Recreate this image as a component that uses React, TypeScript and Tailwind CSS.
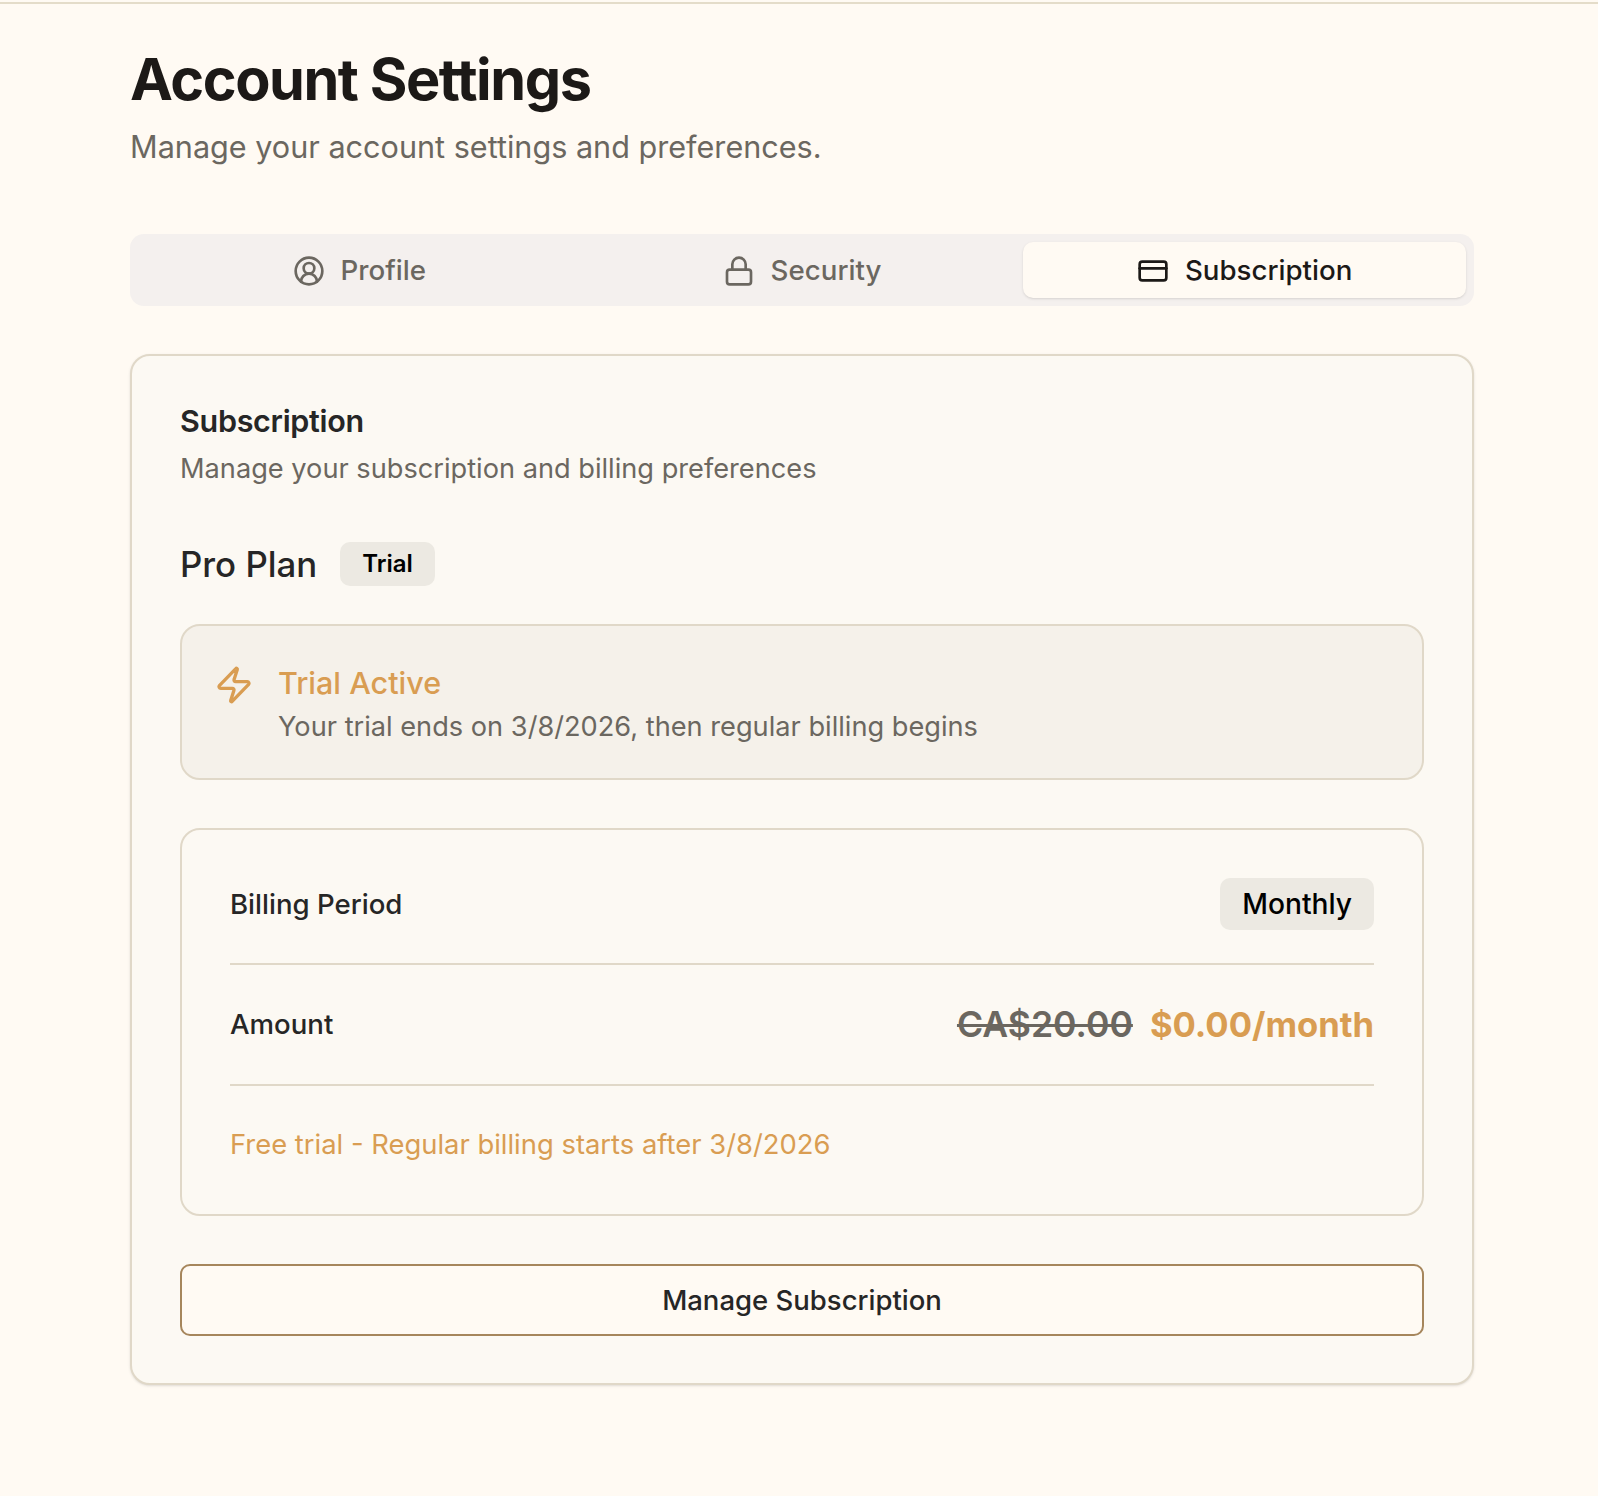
import { CircleUserRound, CreditCard, Lock, Zap } from "lucide-react";

const App = () => {
  return (
    <div className="min-h-[1496px] bg-[#fffaf3] font-['Inter',sans-serif] text-[#1c1917] overflow-hidden">
      <div className="h-[4px] border-b-[2px] border-[#e4dcc9]" />
      <main className="w-[1344px] ml-[130px] pt-[37px]">
        <h1 className="text-[57.6px] leading-[76px] font-bold tracking-[-0.025em]">Account Settings</h1>
        <p className="mt-[10px] text-[30.6px] leading-[40px] text-[#6b6760]">Manage your account settings and preferences.</p>

        <div className="mt-[67px] h-[72px] grid grid-cols-3 gap-0 rounded-[14px] bg-[#f4f0ee] p-2">
          <button className="flex items-center justify-center gap-[16px] rounded-[10px] pt-[2px] text-[27.7px] font-medium text-[#6b6760]">
            <CircleUserRound className="w-[32px] h-[32px]" strokeWidth={2} />
            Profile
          </button>
          <button className="flex items-center justify-center gap-[16px] rounded-[10px] pt-[2px] text-[27.7px] font-medium text-[#6b6760]">
            <Lock className="w-[32px] h-[32px]" strokeWidth={2} />
            Security
          </button>
          <button className="flex items-center justify-center gap-[16px] rounded-[10px] pt-[2px] bg-[#fffaf3] text-[27.7px] font-medium text-[#1c1917] shadow-sm">
            <CreditCard className="w-[32px] h-[32px]" strokeWidth={2} />
            Subscription
          </button>
        </div>

        <section className="mt-[48px] h-[1031px] rounded-[20px] border-2 border-[#e0d8c8] bg-[#fcf9f3] px-[48px] pt-[47px] shadow-sm">
          <h2 className="text-[30.5px] leading-[36px] font-semibold tracking-[-0.01em] text-[#262626]">Subscription</h2>
          <p className="mt-[10px] text-[27.2px] leading-[40px] text-[#6b6760]">Manage your subscription and billing preferences</p>

          <div className="mt-[53px] flex items-center gap-[23px]">
            <span className="text-[34.8px] leading-[44px] font-medium text-[#262626]">Pro Plan</span>
            <span className="rounded-[10px] bg-[#ece9e2] px-[22px] h-[44px] flex items-center text-[24px] font-semibold text-black">Trial</span>
          </div>

          <div className="mt-[38px] h-[156px] flex gap-[24px] rounded-[20px] border-2 border-[#e0d8c8] bg-[#f5f1ea] pl-[32px] pt-[37px]">
            <Zap className="mt-[2px] w-[40px] h-[40px] text-[#d99d52]" strokeWidth={2} />
            <div>
              <div className="text-[30.5px] leading-[40px] font-medium text-[#d99d52]">Trial Active</div>
              <div className="mt-[4px] text-[27.2px] leading-[40px] text-[#6b6760]">Your trial ends on 3/8/2026, then regular billing begins</div>
            </div>
          </div>

          <div className="mt-[48px] h-[388px] rounded-[20px] border-2 border-[#e0d8c8] bg-[#fcf9f3] px-[48px] pt-[48px]">
            <div className="flex items-center justify-between h-[87px] border-b-2 border-[#e0d8c8] pb-[33px]">
              <span className="pt-[2px] text-[27.6px] font-medium text-[#262626]">Billing Period</span>
              <span className="rounded-[10px] bg-[#ece9e2] px-[22px] h-[52px] flex items-center text-[28.2px] font-medium text-black">Monthly</span>
            </div>
            <div className="flex items-center justify-between h-[121px] border-b-2 border-[#e0d8c8]">
              <span className="text-[27.6px] font-medium text-[#262626]">Amount</span>
              <div className="flex items-center gap-[17px]">
                <span className="text-[35.6px] font-semibold text-[#6b6760] line-through">CA$20.00</span>
                <span className="text-[34.6px] font-bold text-[#d99d52]">$0.00/month</span>
              </div>
            </div>
            <p className="mt-[38px] text-[27.4px] leading-[40px] text-[#d99d52]">Free trial - Regular billing starts after 3/8/2026</p>
          </div>

          <button className="mt-[48px] w-full h-[72px] rounded-[10px] border-2 border-[#a6865c] bg-[#fffaf3] pt-[2px] text-[27.5px] font-medium text-[#262626]">
            Manage Subscription
          </button>
        </section>
      </main>
    </div>
  );
};

export default App;
